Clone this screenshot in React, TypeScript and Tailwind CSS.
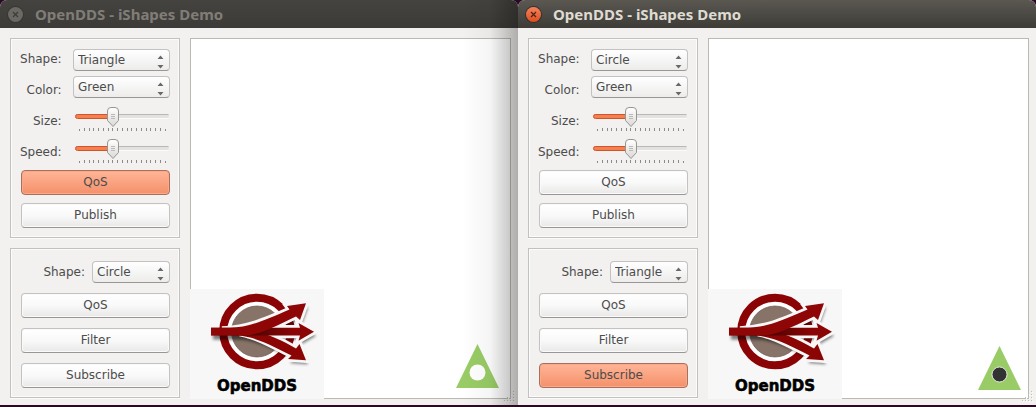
import { useId, useState } from "react";

type Panel = "publish-qos" | "subscribe" | "none";

function PushButton({ label, active = false }: { label: string; active?: boolean }) {
  const tone = active
    ? "border-[#a8705c] bg-linear-to-b from-[#ffb597] to-[#f4906a] shadow-[inset_0_0_0_1px_#fba988]"
    : "border-[#c4c2c0] border-b-[#999795] bg-linear-to-b from-white via-[#f9f9f9] to-[#e9e8e7] shadow-[inset_0_0_0_1px_#fafafa]";
  return (
    <button
      type="button"
      aria-pressed={active}
      className={`h-[25px] w-full rounded-[4px] border pb-[2px] text-center leading-4 ${tone}`}
    >
      {label}
    </button>
  );
}

function Combo({ id, value, options }: { id: string; value: string; options: string[] }) {
  return (
    <div className="relative w-full">
      <select
        id={id}
        defaultValue={value}
        className="block h-[22px] w-full appearance-none rounded-[4px] border border-[#c4c2c0] border-b-[#999795] bg-linear-to-b from-white to-[#edeceb] pb-px pl-1 text-[#4c4c4c]"
      >
        {options.map((o) => (
          <option key={o}>{o}</option>
        ))}
      </select>
      <svg className="pointer-events-none absolute top-[6px] right-[6px]" width="7" height="14" viewBox="0 0 7 14">
        <path d="M3.5 0.5 L6.5 4 H0.5 Z M3.5 13.5 L6.5 10 H0.5 Z" fill="#6a6967" />
      </svg>
    </div>
  );
}

const TICKS = Array.from({ length: 19 }, (_, i) => i);

function Slider({ id }: { id: string }) {
  const [value, setValue] = useState(7);
  const x = 40 + (value - 7) * 4.75;
  const gid = useId();
  return (
    <div className="relative h-6 w-full">
      <svg className="block" width="97" height="24" viewBox="0 0 97 24">
        <defs>
          <linearGradient id={gid} x1="0" x2="0" y1="0" y2="1">
            <stop offset="0" stopColor="#ffffff" />
            <stop offset="1" stopColor="#d9d8d6" />
          </linearGradient>
        </defs>
        <rect x="2" y="7" width="94" height="4" rx="2" fill="#e3e2e0" />
        <path d="M3 7.5 H95.500" stroke="#b9b7b5" />
        <path d="M3 11.500 H95.500" stroke="#fbfbfb" />
        <rect x="2.500" y="7.500" width={x - 2.5} height="4" rx="2" fill="#f5804f" stroke="#d2552a" />
        {TICKS.map((t) => (
          <path key={t} d={`M${Math.round(6 + t * 4.75) + 0.5} ${t === 0 || t === 18 ? 22 : 21} V24`} stroke="#8d8b89" />
        ))}
        <path
          d={`M${x - 5.5} 4 Q${x - 5.5} 0.5 ${x - 2} 0.5 H${x + 2} Q${x + 5.5} 0.5 ${x + 5.5} 4 V13.500 L${x} 19.500 L${x - 5.5} 13.500 Z`}
          fill={`url(#${gid})`}
          stroke="#989694"
        />
        <path d={`M${x - 2} 7.5 h4 M${x - 2} 9.500 h4 M${x - 2} 11.500 h4`} stroke="#bbb9b7" />
      </svg>
      <input
        id={id}
        type="range"
        min={0}
        max={18}
        value={value}
        onChange={(e) => setValue(Number(e.target.value))}
        className="absolute inset-0 h-6 w-full cursor-pointer opacity-0"
      />
    </div>
  );
}

const UPPER = "M21 38.7 H40 C58 38.500 73 32 99.500 20.500 L97 17 L116 14.300 L110 31 L106 27.500 C92 34 76 43 60 46.300 H21 Z";
const MIDDLE = "M21 38.700 H110 L108.500 34 L124 42.700 L108.500 51.700 L110 46.500 H21 Z";
const LOWER = "M28 46.300 V40 H52 C72 42 90 50 106 59.500 L109.500 55 L116 71.300 L98 70 L101.500 66.500 C84 58 68 48 46 46.300 Z";

function Logo() {
  const id = useId();
  return (
    <svg className="absolute -bottom-px -left-px" width="134" height="110" viewBox="0 0 134 110" role="img" aria-label="OpenDDS">
      <defs>
        <filter id={`${id}s`} x="-20%" y="-20%" width="140%" height="150%">
          <feGaussianBlur stdDeviation="1.8" />
        </filter>
        <linearGradient id={`${id}g`} x1="0" x2="1" y1="0" y2="0">
          <stop offset="0" stopColor="#8b0505" />
          <stop offset="0.4" stopColor="#4e0303" />
          <stop offset="0.8" stopColor="#8b0505" />
        </linearGradient>
      </defs>
      <rect width="134" height="110" fill="#f7f7f7" />
      <circle cx="67" cy="42.500" r="33.800" fill="#fff" stroke="#8b0304" strokeWidth="8" />
      <circle cx="67" cy="42.500" r="25.500" fill="#877368" stroke="#6b5a51" strokeWidth="0.700" />
      <g fill="#000" opacity="0.5" transform="translate(2 4)" filter={`url(#${id}s)`}>
        <path d={UPPER} />
        <path d={MIDDLE} />
        <path d={LOWER} />
      </g>
      <g fill="#f7f7f7" stroke="#f7f7f7" strokeWidth="5.500">
        <path d="M32 40 C58 38.500 73 32 99.500 20.500 L97 17 L116 14.300 L110 31 L106 27.500 C92 34 76 43 60 44 Z" />
        <path d="M60 38.700 H110 L108.500 34 L124 42.700 L108.500 51.700 L110 46.500 H60 Z" />
        <path d="M52 42 C72 42 90 50 106 59.500 L109.500 55 L116 71.300 L98 70 L101.500 66.500 C84 58 68 48 52 45 Z" />
      </g>
      <path d={LOWER} fill="#8b0505" />
      <path d={MIDDLE} fill={`url(#${id}g)`} />
      <path d={UPPER} fill="#8f0606" />
      <text x="27" y="102" fontSize="15" fontWeight="700" fill="#000" stroke="#000" strokeWidth="0.600" className="font-['DejaVu_Sans',sans-serif]">
        OpenDDS
      </text>
    </svg>
  );
}

function Grip() {
  const dots = [[9, 1], [9, 4], [6, 4], [9, 7], [6, 7], [3, 7], [9, 10], [6, 10], [3, 10], [0, 10]];
  return (
    <svg className="absolute right-[2px] bottom-[2px]" width="12" height="12" viewBox="0 0 12 12">
      {dots.map(([x, y]) => (
        <g key={`${x}-${y}`}>
          <rect x={x + 1} y={y} width="1" height="1" fill="#fff" />
          <rect x={x} y={y - 1} width="1" height="1" fill="#c3c0bc" />
        </g>
      ))}
    </svg>
  );
}

const FRAME = "border border-[#c3c1bf] shadow-[inset_0_0_0_1px_#fbfbfa,0_1px_0_#fbfbfa]";

function DemoWindow({ focused, publishShape, subscribeShape, active }: { focused: boolean; publishShape: string; subscribeShape: string; active: Panel }) {
  const id = useId();
  const shapes = ["Circle", "Square", "Triangle"];
  return (
    <section className="relative flex min-w-0 flex-col overflow-hidden rounded-t-[7px] bg-[#f2f1f0]">
      <header
        className={`flex h-7 items-center gap-3 pl-2 ${
          focused ? "bg-linear-to-b from-[#5b5852] to-[#3d3c37] text-[#dfdbd2]" : "bg-linear-to-b from-[#45433f] to-[#3c3b37] text-[#807d78]"
        }`}
      >
        <button
          type="button"
          aria-label="Close"
          className={`flex size-[15px] items-center justify-center rounded-full ring-1 ${
            focused ? "bg-linear-to-b from-[#f4825a] to-[#df4c18] ring-[#35322d]" : "bg-[#6b6963] ring-[#383733]"
          }`}
        >
          <svg width="7" height="7" viewBox="0 0 7 7">
            <path d="M1 1 L6 6 M6 1 L1 6" stroke={focused ? "#4a2314" : "#3c3b37"} strokeWidth="1.200" />
          </svg>
        </button>
        <h1 className="truncate font-['Noto_Sans',sans-serif] text-[15px] leading-5 font-bold">OpenDDS - iShapes Demo</h1>
      </header>

      <div className="flex flex-1 gap-[10px] pt-[10px] pr-[7px] pb-[6px] pl-[10px]">
        <div className="flex w-[170px] shrink-0 flex-col gap-[10px]">
          <form className={`h-[200px] px-[9px] pt-[3px] ${FRAME}`}>
            <div className="flex justify-between">
              <div className="flex flex-col pt-[2px] text-right leading-[31px]">
                <label htmlFor={`${id}shape`}>Shape:</label>
                <label htmlFor={`${id}color`}>Color:</label>
                <label htmlFor={`${id}size`}>Size:</label>
                <label htmlFor={`${id}speed`}>Speed:</label>
              </div>
              <div className="flex w-[97px] flex-col pt-[7px]">
                <div className="flex flex-col gap-[5px]">
                  <Combo id={`${id}shape`} value={publishShape} options={shapes} />
                  <Combo id={`${id}color`} value="Green" options={["Red", "Green", "Blue"]} />
                </div>
                <div className="flex flex-col gap-2 pt-[9px]">
                  <Slider id={`${id}size`} />
                  <Slider id={`${id}speed`} />
                </div>
              </div>
            </div>
            <div className="flex flex-col gap-2 pt-[2px] pl-px">
              <PushButton label="QoS" active={active === "publish-qos"} />
              <PushButton label="Publish" />
            </div>
          </form>
          <form className={`flex h-[150px] flex-col gap-[10px] pt-3 pr-[9px] pl-[10px] ${FRAME}`}>
            <div className="flex items-center justify-end gap-[7px]">
              <label htmlFor={`${id}sub`} className="leading-4">Shape:</label>
              <div className="w-[78px]">
                <Combo id={`${id}sub`} value={subscribeShape} options={shapes} />
              </div>
            </div>
            <PushButton label="QoS" />
            <PushButton label="Filter" />
            <PushButton label="Subscribe" active={active === "subscribe"} />
          </form>
        </div>

        <main className="relative min-w-0 flex-1 border border-[#bcb8b2] bg-white">
          <Logo />
          <svg
            className={`absolute ${focused ? "right-[7px] bottom-[8px]" : "right-[11px] bottom-[10px]"}`}
            width="43"
            height="44"
            viewBox="0 0 43 44"
          >
            <path d="M21.500 0 L43 44 H0 Z" fill="#99cc66" />
            <circle cx="21.500" cy="28.500" r={focused ? 7.5 : 8} fill={focused ? "#333" : "#fff"} stroke="#fff" strokeWidth={focused ? 0.8 : 0} />
          </svg>
        </main>
      </div>
      <Grip />
      {!focused && (
        <div className="pointer-events-none absolute inset-y-0 right-0 w-14 bg-linear-to-r from-transparent via-black/4 to-black/28" />
      )}
    </section>
  );
}

export default function App() {
  return (
    <div className="grid min-h-screen grid-cols-2 bg-[#2a0a22] pb-[2px] font-['DejaVu_Sans',sans-serif] text-[12px] text-[#4c4c4c]">
      <DemoWindow focused={false} publishShape="Triangle" subscribeShape="Circle" active="publish-qos" />
      <DemoWindow focused publishShape="Circle" subscribeShape="Triangle" active="subscribe" />
    </div>
  );
}
